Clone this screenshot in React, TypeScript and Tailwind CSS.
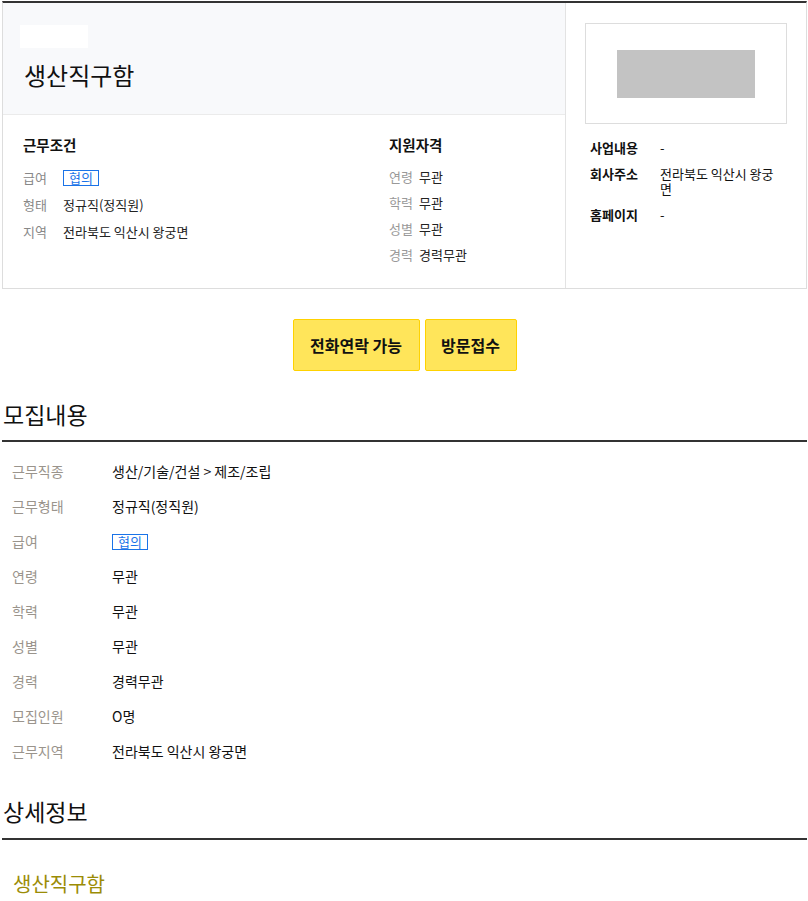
const FONT = { fontFamily: '"Noto Sans CJK KR", "Noto Sans", sans-serif' }

const CONDITIONS = [
  { label: "급여", value: "협의", badge: true },
  { label: "형태", value: "정규직(정직원)" },
  { label: "지역", value: "전라북도 익산시 왕궁면" },
]

const QUALIFY = [
  { label: "연령", value: "무관" },
  { label: "학력", value: "무관" },
  { label: "성별", value: "무관" },
  { label: "경력", value: "경력무관" },
]

const DETAILS = [
  { label: "근무직종", value: "생산/기술/건설 > 제조/조립" },
  { label: "근무형태", value: "정규직(정직원)" },
  { label: "급여", value: "협의", badge: true },
  { label: "연령", value: "무관" },
  { label: "학력", value: "무관" },
  { label: "성별", value: "무관" },
  { label: "경력", value: "경력무관" },
  { label: "모집인원", value: "O명" },
  { label: "근무지역", value: "전라북도 익산시 왕궁면" },
]

function Badge({ children }: { children: string }) {
  return (
    <span className="inline-block border border-[#1a73e8] text-[#1a73e8] text-[13px] leading-[14px] px-[5px]">
      {children}
    </span>
  )
}

export default function App() {
  return (
    <div className="bg-white min-h-[901px] pl-[2px] pr-[1px] pt-[1px] text-[#111]" style={FONT}>
      {/* 상단 카드 */}
      <div className="flex border border-[#dddddd] border-t-2 border-t-[#333] h-[288px]">
        <div className="w-[563px] border-r border-[#e3e3e3] flex flex-col">
          <div className="bg-[#f8f9fb] border-b border-[#ebebeb] h-[112px] pl-[17px] pt-[22px]">
            <div className="w-[68px] h-[23px] bg-white" />
            <h1 className="text-[24px] leading-[30px] mt-[12px] ml-[4px]">생산직구함</h1>
          </div>
          <div className="flex pt-[20px] pl-[20px]">
            <div className="w-[366px]">
              <h3 className="text-[14.5px] font-bold leading-[20px]">근무조건</h3>
              <div className="mt-[14px] flex flex-col gap-[9px]">
                {CONDITIONS.map(r => (
                  <div key={r.label} className="flex items-center text-[13px] leading-[18px]">
                    <span className="w-[40px] text-[#888]">{r.label}</span>
                    {r.badge ? <Badge>{r.value}</Badge> : <span className="text-[#222]">{r.value}</span>}
                  </div>
                ))}
              </div>
            </div>
            <div>
              <h3 className="text-[14.5px] font-bold leading-[20px]">지원자격</h3>
              <div className="mt-[13px] flex flex-col gap-[9px]">
                {QUALIFY.map(r => (
                  <div key={r.label} className="flex text-[13px] leading-[17px]">
                    <span className="w-[30px] text-[#999]">{r.label}</span>
                    <span className="text-[#222]">{r.value}</span>
                  </div>
                ))}
              </div>
            </div>
          </div>
        </div>
        <div className="flex-1 pt-[20px] pl-[19px] pr-[19px]">
          <div className="h-[101px] border border-[#dddddd] flex items-center justify-center">
            <div className="w-[138px] h-[48px] bg-[#c3c3c3]" />
          </div>
          <div className="mt-[16px] pl-[5px] flex flex-col gap-[11px] text-[13px] leading-[15px]">
            <div className="flex">
              <span className="w-[70px] font-bold">사업내용</span>
              <span>-</span>
            </div>
            <div className="flex">
              <span className="w-[70px] font-bold shrink-0">회사주소</span>
              <span className="w-[124px]">전라북도 익산시 왕궁면</span>
            </div>
            <div className="flex">
              <span className="w-[70px] font-bold">홈페이지</span>
              <span>-</span>
            </div>
          </div>
        </div>
      </div>

      {/* 버튼 */}
      <div className="flex justify-center gap-[5px] mt-[30px]">
        <button className="h-[52px] w-[127px] bg-[#ffe55a] border border-[#ffd200] rounded-[2px] text-[16px] font-bold">전화연락 가능</button>
        <button className="h-[52px] w-[92px] bg-[#ffe55a] border border-[#ffd200] rounded-[2px] text-[16px] font-bold">방문접수</button>
      </div>

      {/* 모집내용 */}
      <h2 className="text-[23px] leading-[30px] mt-[28px] ml-[1px]">모집내용</h2>
      <div className="border-t-2 border-[#333] mt-[11px]" />
      <div className="pl-[10px] pt-[12px] flex flex-col">
        {DETAILS.map(r => (
          <div key={r.label} className="flex items-center h-[35px] text-[14px]">
            <span className="w-[100px] text-[#9a948c]">{r.label}</span>
            {r.badge ? <Badge>{r.value}</Badge> : <span className="text-[#111]">{r.value}</span>}
          </div>
        ))}
      </div>

      {/* 상세정보 */}
      <h2 className="text-[23px] leading-[30px] mt-[27px] ml-[1px]">상세정보</h2>
      <div className="border-t-2 border-[#333] mt-[12px]" />
      <p className="text-[20px] leading-[28px] text-[#9b8c06] mt-[30px] ml-[11px]">생산직구함</p>
    </div>
  )
}
